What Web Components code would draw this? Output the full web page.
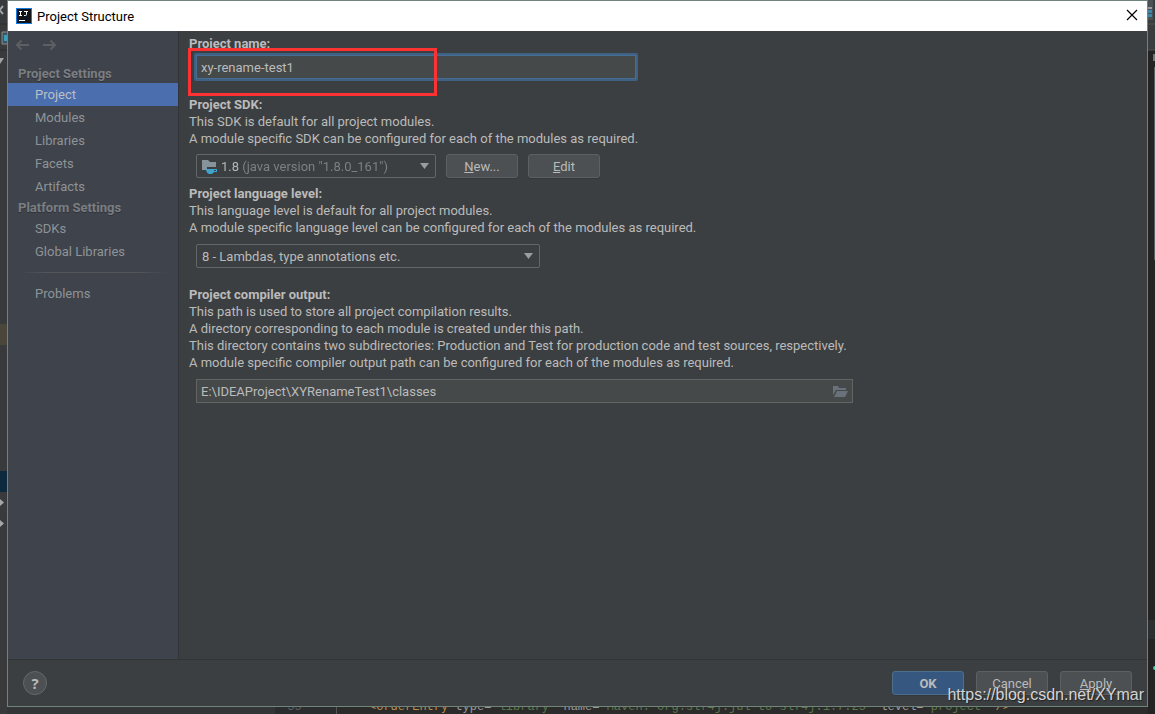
<!DOCTYPE html>
<html lang="en">
<head>
<meta charset="utf-8">
<title>Project Structure</title>
<style>
  html { height: 100%; }
  body {
    margin: 0;
    height: 100%;
    background: #2b2b2b;
    color: #bbbbbb;
    font-family: Roboto, "Noto Sans", sans-serif;
    font-size: 13px;
    line-height: 17px;
  }
</style>
</head>
<body>
<ide-desktop>
  <structure-dialog>
    <dialog-titlebar slot="title">Project Structure</dialog-titlebar>
    <settings-nav slot="nav">
      <nav-group heading="Project Settings">
        <nav-item selected>Project</nav-item>
        <nav-item>Modules</nav-item>
        <nav-item>Libraries</nav-item>
        <nav-item>Facets</nav-item>
        <nav-item>Artifacts</nav-item>
      </nav-group>
      <nav-group heading="Platform Settings">
        <nav-item>SDKs</nav-item>
        <nav-item>Global Libraries</nav-item>
      </nav-group>
      <nav-divider></nav-divider>
      <nav-item>Problems</nav-item>
    </settings-nav>
    <project-page></project-page>
    <dialog-footer slot="footer">
      <push-button primary>OK</push-button>
      <push-button>Cancel</push-button>
      <push-button><u>A</u>pply</push-button>
    </dialog-footer>
  </structure-dialog>
</ide-desktop>
<water-mark>https://blog.csdn.net/XYmar</water-mark>

<script>
const define = (name, html) => {
  const template = document.createElement('template');
  template.innerHTML = html;
  customElements.define(name, class extends HTMLElement {
    constructor() {
      super();
      this.attachShadow({ mode: 'open' }).append(template.content.cloneNode(true));
    }
    connectedCallback() {
      const heading = this.shadowRoot.querySelector('[data-heading]');
      if (heading) heading.textContent = this.getAttribute('heading');
    }
  });
};

/* The editor window, of which only the edges show round the dialog. */
define('ide-desktop', `
<style>
  :host {
    display: grid;
    grid-template: minmax(0, 1fr) 7px / 7px minmax(0, 1fr) 7px;
    min-height: 100%;
    background: #2b2b2b;
  }
  svg { display: block; }
  .left { grid-area: 1 / 1 / 3 / 2; background: #393a3b; overflow: hidden; }
  .right { grid-area: 1 / 3 / 3 / 4; background: #242424; overflow: hidden; }
  .dialog { grid-area: 1 / 2; display: grid; min-width: 0; }
  .code {
    grid-area: 2 / 2;
    display: grid;
    grid-template-columns: 268px 62px 24px minmax(0, 1fr);
    align-items: end;
    overflow: hidden;
    font: 12px/14px "Liberation Mono", monospace;
    white-space: pre;
  }
  .tree { height: 7px; background: #333536; }
  .num { height: 7px; display: flex; align-items: flex-end; justify-content: center; padding-right: 22px; background: #2b2c2e; border-right: 1px solid #555; color: #5c5f62; box-sizing: border-box; }
  .src { height: 7px; display: flex; align-items: flex-end; grid-column: 4; padding-left: 8px; color: #587647; }
  b { font-weight: 400; color: #b98f4a; }
  i { font-style: normal; color: #9a9a9a; }
</style>
<div class="left" aria-hidden="true">
  <svg width="7" height="714" viewBox="0 0 7 714">
    <path d="M0 24h7M0 50h7" stroke="#2c2d2e"/>
    <path d="M-4 6l7 8M3 6l-7 8" stroke="#a0a3a5" stroke-width="2"/>
    <path d="M7 32H2v12h5" fill="#3b5560" stroke="#858b8e"/>
    <path d="M4 35h3v6H4z" fill="#3c9fbb"/>
    <path d="M-3 58h7l-4 6z" fill="#a0a3a5"/>
    <path d="M0 324h7v21H0z" fill="#4a463c"/>
    <path d="M0 471h7v21H0z" fill="#0d293e"/>
    <path d="M0 499l4 3.500-4 3.500zM0 520l4 3.500-4 3.500z" fill="#a5a7a8"/>
  </svg>
</div>
<div class="dialog"><slot></slot></div>
<div class="code"><span class="tree"></span><span class="num">35</span><span class="src"><span><b>&lt;orderEntry</b> <i>type=</i>"library" <i>name=</i>"Maven: org.slf4j:jul-to-slf4j:1.7.25" <i>level=</i>"project" <b>/&gt;</b></span></span></div>
<div class="right" aria-hidden="true">
  <svg width="7" height="714" viewBox="0 0 7 714">
    <path d="M0 0h7v50H0z" fill="#3a3c3e"/>
    <path d="M0 0h5v20H0z" fill="#4b5053"/>
    <path d="M0 7h4v2H0z" fill="#9a9da0"/>
    <path d="M0 10h4v3H0zM0 14h4v3H0z" fill="#3d87ad"/>
    <path d="M0 24h7M0 50h7" stroke="#505254"/>
    <path d="M5 54h2v7H5z" fill="#777"/>
    <path d="M6 67h1v193H6z" fill="#5d6062"/>
    <path d="M0 620h7v19H0z" fill="#2d2e2f"/>
    <circle cx="7" cy="668" r="2" fill="#4fc8a8"/>
  </svg>
</div>`);

define('structure-dialog', `
<style>
  :host {
    display: grid;
    grid-template: 30px minmax(0, 1fr) auto / 170px minmax(0, 1fr);
    border: 1px solid #70847a;
    background: #3c3f41;
    min-width: 0;
  }
  .title { grid-column: 1 / 3; display: grid; }
  .nav { display: grid; background: #3e434c; border-right: 1px solid #323437; margin-right: -1px; }
  main { padding: 4px 11px; min-width: 0; }
  .footer { grid-column: 1 / 3; display: grid; }
</style>
<div class="title"><slot name="title"></slot></div>
<div class="nav"><slot name="nav"></slot></div>
<main><slot></slot></main>
<div class="footer"><slot name="footer"></slot></div>`);

define('dialog-titlebar', `
<style>
  :host { display: flex; align-items: center; padding: 0 7px 0 8px; background: #fff; color: #000; }
  h1 { margin: 0 auto 0 5px; font: inherit; }
  svg { display: block; }
  button { padding: 0; border: 0; background: none; width: 16px; height: 16px; }
</style>
<svg width="16" height="16" viewBox="0 0 16 16" aria-hidden="true">
  <path d="M0 0h16v16H0z" fill="#147ce0"/>
  <path d="M1 1h14v14H1z" fill="#111419"/>
  <path d="M3 3.500h3M4.500 3v5M3 7.500h3M8 3.500h4M10.500 3v3.500q0 1-1 1H8" fill="none" stroke="#fff"/>
  <path d="M3 12h6v1H3z" fill="#fff"/>
</svg>
<h1><slot></slot></h1>
<button aria-label="Close"><svg width="16" height="16" viewBox="0 0 16 16"><path d="M3 2l10 10M13 2L3 12" stroke="#000" stroke-width="1.200"/></svg></button>`);

define('settings-nav', `
<style>
  :host { display: block; color: #8f9396; }
  .history { display: flex; gap: 13px; height: 33px; padding: 6px 8px 0; box-sizing: border-box; }
  button { display: block; width: 14px; height: 16px; padding: 0; border: 0; background: none; }
  svg { display: block; }
  path { fill: none; stroke: #5d6063; stroke-width: 2; }
</style>
<div class="history">
  <button aria-label="Back"><svg width="14" height="16" viewBox="0 0 14 16"><path d="M13 8H1M5.500 3.500L1 8l4.500 4.500"/></svg></button>
  <button aria-label="Forward"><svg width="14" height="16" viewBox="0 0 14 16"><path d="M0 8h12M7.500 3.500L12 8l-4.500 4.500"/></svg></button>
</div>
<nav><slot></slot></nav>`);

define('nav-group', `
<style>
  :host { display: block; }
  h2 { margin: 0; padding-left: 10px; font-size: 13px; line-height: 19px; color: #7b7e81; text-shadow: 0 1px 0 #303339; }
</style>
<h2 data-heading></h2><slot></slot>`);

define('nav-item', `
<style>
  :host { display: block; }
  a { display: block; padding-left: 27px; line-height: 23px; color: inherit; text-decoration: none; }
  :host([selected]) a { background: #4b6eaf; color: #bbbfc6; }
</style>
<a href="#"><slot></slot></a>`);

define('nav-divider', `
<style>
  :host { display: block; height: 1px; margin: 9px 10px; background: linear-gradient(90deg, transparent, #54565a 20%, #54565a 80%, transparent); }
</style>`);

define('setting-group', `
<style>
  :host { display: block; }
  .control { display: flex; gap: 10px; padding: 8px 7px 6px; }
  :host(.sdk) .control { padding: 7px; }
</style>
<slot></slot>
<div class="control"><slot name="control"></slot></div>`);

define('combo-box', `
<style>
  :host {
    display: flex; align-items: center; position: relative; box-sizing: border-box;
    height: 24px; border: 1px solid #646668; border-radius: 2px;
  }
  svg { position: absolute; right: 6px; pointer-events: none; }
  ::slotted(svg) { margin-left: 5px; flex: none; }
</style>
<slot></slot>
<svg width="9" height="6" viewBox="0 0 9 6" aria-hidden="true"><path d="M0 0h9L4.500 6z" fill="#9a9da0"/></svg>`);

define('push-button', `
<style>
  :host { display: block; }
  button {
    display: block; width: 72px; height: 24px; padding: 0; box-sizing: border-box;
    border: 1px solid #5e6060; border-radius: 3px; background: #4c5052; color: #bbbbbb;
    font: inherit; box-shadow: 0 1px 0 #35383a;
  }
  :host([primary]) button { background: #365880; border-color: #4c708c; font-weight: 700; }
</style>
<button><slot></slot></button>`);

define('project-page', `
<style>
  :host { display: block; }
  label { display: block; font-weight: 700; }
  p { margin: 0; }
  input, select { font: inherit; color: inherit; box-sizing: border-box; border-radius: 0; margin: 0; outline: 0; }
  .name { position: relative; padding-bottom: 15px; }
  .name input {
    display: block; width: 444px; max-width: 100%; height: 28px; margin: 1px 0 0 5px; padding: 0 5px;
    border: 2px solid #3f6184; border-radius: 2px; background: #45494a;
    box-shadow: inset 0 0 0 1px #466d94;
  }
  .mark { position: absolute; left: -1px; top: 13px; width: 249px; height: 48px; box-sizing: border-box; border: 3px solid #fd3333; }
  combo-box.sdk { width: 240px; }
  combo-box.level { width: 344px; }
  select { appearance: none; border: 0; background: none; width: 100%; height: 22px; padding: 0 5px; }
  .sdk select { padding-left: 3px; color: transparent; background: linear-gradient(90deg, #bbbbbb 22px, #7f8284 22px); background-clip: text; }
  setting-group.last { padding-top: 12px; }
  .path { display: flex; align-items: center; width: 657px; max-width: 100%; height: 24px; box-sizing: border-box; border: 1px solid #646464; background: #45494a; padding-right: 4px; }
  .path input { flex: 1; min-width: 0; height: 22px; padding: 0 4px; border: 0; background: none; }
  .path button { padding: 0; border: 0; background: none; width: 16px; height: 16px; }
  svg { display: block; }
</style>
<div class="name">
  <label for="name">Project name:</label>
  <input id="name" value="xy-rename-test1">
  <div class="mark"></div>
</div>
<setting-group class="sdk">
  <label for="sdk">Project SDK:</label>
  <p>This SDK is default for all project modules.</p>
  <p>A module specific SDK can be configured for each of the modules as required.</p>
  <combo-box slot="control" class="sdk">
    <svg width="16" height="16" viewBox="0 0 16 16" aria-hidden="true">
      <path d="M0 2h6l2 2h6v5H5v3H0z" fill="#87939a"/>
      <path d="M4 11h11v3h-3q-1 2-3 2H7q-3-1-3-5z" fill="#3fa3cc"/>
      <path d="M12 12h2v1h-2z" fill="#3c3f41"/>
    </svg>
    <select id="sdk"><option>1.8 (java version "1.8.0_161")</option></select>
  </combo-box>
  <push-button slot="control"><u>N</u>ew...</push-button>
  <push-button slot="control"><u>E</u>dit</push-button>
</setting-group>
<setting-group>
  <label for="level">Project language level:</label>
  <p>This language level is default for all project modules.</p>
  <p>A module specific language level can be configured for each of the modules as required.</p>
  <combo-box slot="control" class="level">
    <select id="level"><option>8 - Lambdas, type annotations etc.</option></select>
  </combo-box>
</setting-group>
<setting-group class="last">
  <label for="output">Project compiler output:</label>
  <p>This path is used to store all project compilation results.</p>
  <p>A directory corresponding to each module is created under this path.</p>
  <p>This directory contains two subdirectories: Production and Test for production code and test sources, respectively.</p>
  <p>A module specific compiler output path can be configured for each of the modules as required.</p>
  <div slot="control" class="path">
    <input id="output" value="E:\\IDEAProject\\XYRenameTest1\\classes">
    <button aria-label="Browse"><svg width="16" height="16" viewBox="0 0 16 16"><path d="M1 3h5l1 2h7v2H4l-3 5z" fill="#69727a"/><path d="M5 8h11l-3 6H2z" fill="#69727a"/></svg></button>
  </div>
</setting-group>`);

define('dialog-footer', `
<style>
  :host { display: flex; align-items: center; gap: 12px; height: 46px; padding: 0 15px; border-top: 1px solid #323436; }
  .help {
    width: 24px; height: 24px; margin-right: auto; padding: 0; border: 1px solid #666969; border-radius: 50%;
    background: #4c5052; color: #bbbbbb; font: 700 15px/20px "Open Sans", sans-serif;
  }
</style>
<button class="help">?</button>
<slot></slot>`);

define('water-mark', `
<style>
  :host {
    display: block; position: absolute; right: 11px; bottom: 9px; pointer-events: none;
    font: 16px/20px "Liberation Sans", Arial, sans-serif; color: #d4d5d6; text-shadow: 1px 1px 1px #222;
  }
</style>
<slot></slot>`);
</script>
</body>
</html>
